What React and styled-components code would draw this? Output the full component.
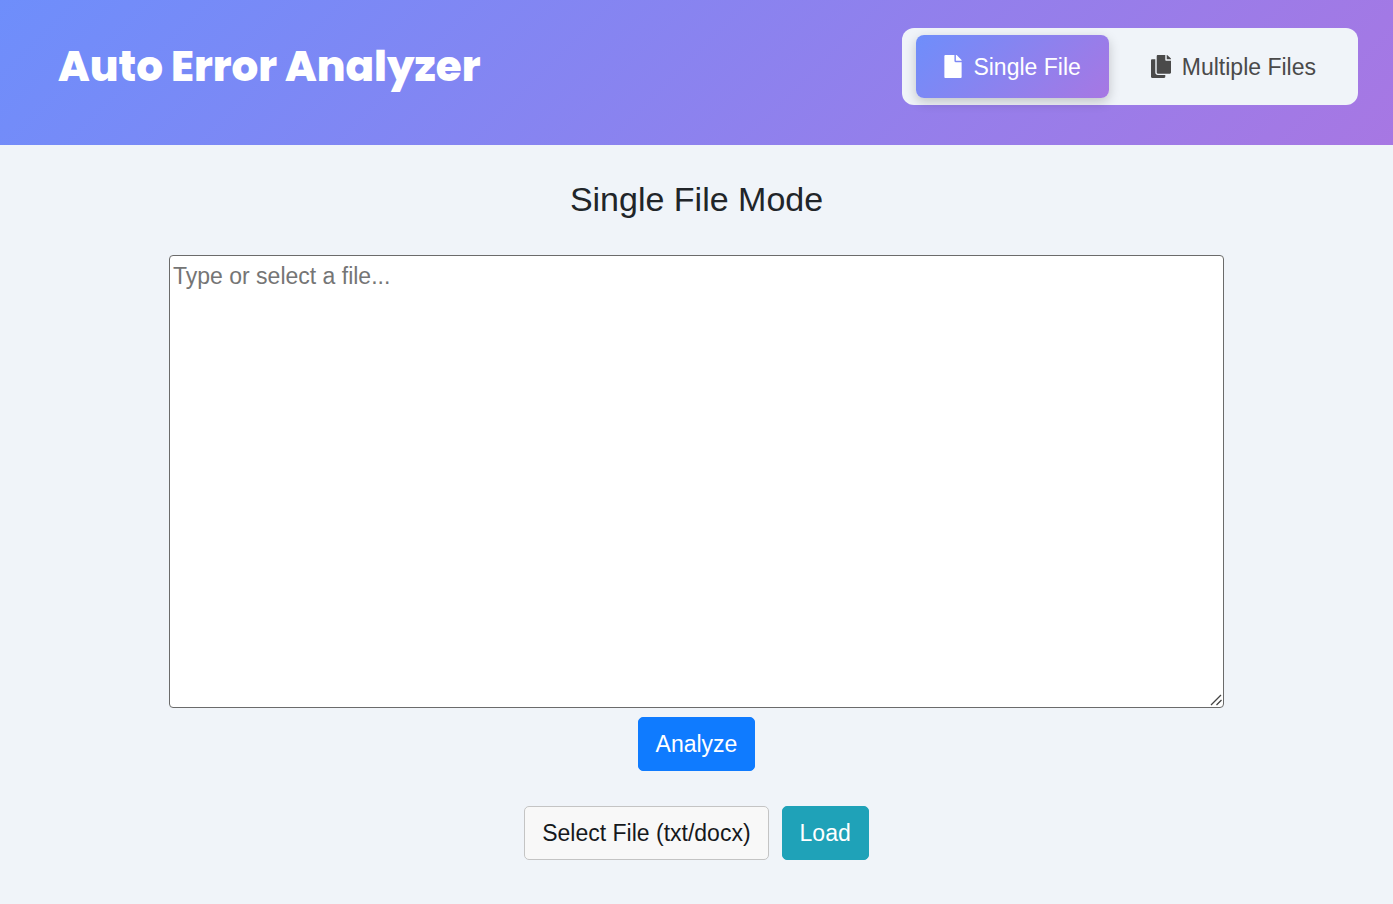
import React, { useState } from "react";
import styled, { createGlobalStyle } from "styled-components";
import { FaFile, FaCopy } from "react-icons/fa";

const GlobalStyle = createGlobalStyle`
  *, *::before, *::after { box-sizing: border-box; }
  body {
    margin: 0;
    background: #f0f4f9;
    color: #212529;
    font-family: "Liberation Sans", Arial, sans-serif;
    font-size: 23px;
    line-height: 36px;
  }
  button, textarea { font: inherit; }
`;

const gradient = "linear-gradient(135deg, #6e8efb, #a777e3)";

const Header = styled.header`
  display: flex;
  justify-content: space-between;
  align-items: flex-start;
  padding: 28px 35px 40px 58px;
  background: ${gradient};
`;

const Brand = styled.h1`
  margin: 0;
  color: #fff;
  font-family: Poppins, Inter, sans-serif;
  font-size: 42px;
  font-weight: 800;
  line-height: 77px;
`;

const ModeSwitch = styled.nav`
  display: flex;
  gap: 14px;
  padding: 7px 14px;
  border-radius: 12px;
  background: #f0f4f9;
`;

const ModeButton = styled.button`
  display: flex;
  align-items: center;
  gap: 11px;
  height: 63px;
  padding: 0 28px;
  border: 0;
  border-radius: 8px;
  cursor: pointer;
  color: ${(p) => (p.$active ? "#fff" : "#4a4a4a")};
  background: ${(p) => (p.$active ? gradient : "transparent")};
  box-shadow: ${(p) => (p.$active ? "0 4px 12px rgba(0, 0, 0, 0.2)" : "none")};
`;

const FileIcon = styled(FaFile)`
  width: 18px;
  height: 23px;
`;

const CopyIcon = styled(FaCopy)`
  width: 20px;
  height: 23px;
`;

const Main = styled.main`
  display: flex;
  flex-direction: column;
  align-items: center;
  padding: 34px 169px 43px;
`;

const Title = styled.h2`
  margin: 0;
  font-size: 34px;
  font-weight: 400;
  line-height: 40px;
`;

const EditorFrame = styled.div`
  position: relative;
  width: 100%;
  margin-top: 36px;
`;

const Editor = styled.textarea`
  display: block;
  width: 100%;
  height: 453px;
  padding: 2px 3px;
  border: 1px solid #6b6b6b;
  border-radius: 4px;
  background: #fff;
  resize: vertical;
  &::placeholder { color: #757575; }
  &::-webkit-resizer { background: transparent; }
`;

const Grip = styled.svg`
  position: absolute;
  right: 2px;
  bottom: 2px;
  pointer-events: none;
`;

const Actions = styled.div`
  display: flex;
  gap: 13px;
  margin-top: ${(p) => p.$top}px;
`;

const Button = styled.button`
  height: 54px;
  padding: 0 17px;
  border: 1px solid ${(p) => p.$border || p.$color};
  border-radius: 5px;
  cursor: pointer;
  color: ${(p) => p.$text || "#fff"};
  background: ${(p) => p.$color};
`;

export default function App() {
  const [mode, setMode] = useState("single");
  return (
    <>
      <GlobalStyle />
      <Header>
        <Brand>Auto Error Analyzer</Brand>
        <ModeSwitch aria-label="Mode">
          <ModeButton $active={mode === "single"} onClick={() => setMode("single")}>
            <FileIcon aria-hidden="true" />
            Single File
          </ModeButton>
          <ModeButton $active={mode === "multiple"} onClick={() => setMode("multiple")}>
            <CopyIcon aria-hidden="true" />
            Multiple Files
          </ModeButton>
        </ModeSwitch>
      </Header>
      <Main>
        <Title>{mode === "single" ? "Single File Mode" : "Multiple Files Mode"}</Title>
        <EditorFrame>
          <Editor aria-label="Text to analyze" placeholder="Type or select a file..." />
          <Grip width="12" height="12" viewBox="0 0 12 12" stroke="#444" strokeWidth="1.3" aria-hidden="true">
            <path d="M1 11 11 1M6.5 11 11.5 6" />
          </Grip>
        </EditorFrame>
        <Actions $top={9}>
          <Button $color="#0f7bff">Analyze</Button>
        </Actions>
        <Actions $top={35}>
          <Button $color="#f8f8f8" $border="#c4c4c4" $text="#16191c">Select File (txt/docx)</Button>
          <Button $color="#1fa2b8">Load</Button>
        </Actions>
      </Main>
    </>
  );
}
